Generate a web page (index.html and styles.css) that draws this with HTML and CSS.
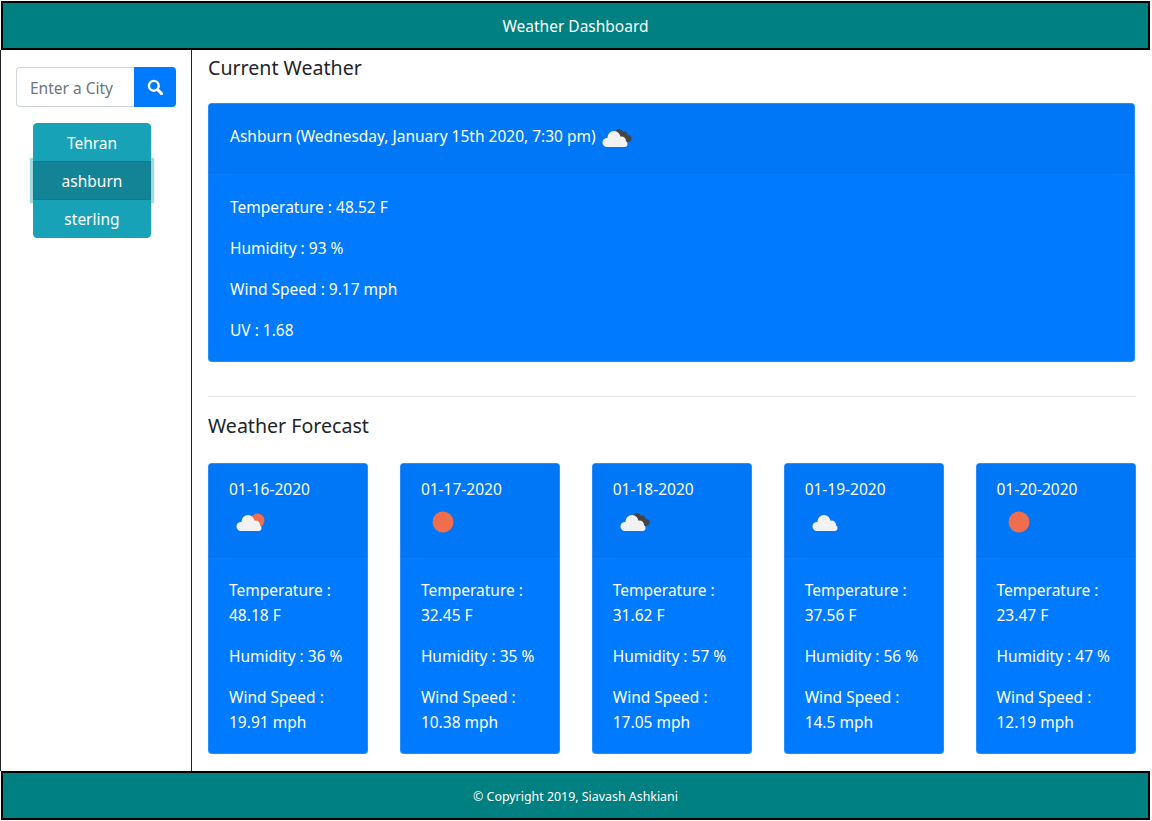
FILE: index.html
```html
<!DOCTYPE html>
<html lang="en">
<head>
    <meta charset="UTF-8">
    <title>Weather Dashboard</title>
    <link rel="stylesheet" href="styles.css">
</head>
<body>
    <svg class="icon-defs" aria-hidden="true">
        <symbol id="cloud-shape" viewBox="0 0 30 30">
            <g fill="#f2f2f2">
                <circle cx="5" cy="19.5" r="4.5"/>
                <circle cx="12" cy="14.5" r="6.5"/>
                <circle cx="19.5" cy="18" r="4.5"/>
                <circle cx="22.5" cy="21" r="3"/>
                <rect x="5" y="18" width="18" height="6"/>
            </g>
        </symbol>
        <symbol id="sun" viewBox="0 0 30 30">
            <circle cx="15" cy="15" r="10.5" fill="#ee6e4d"/>
        </symbol>
        <symbol id="cloud-sun" viewBox="0 0 30 30">
            <circle cx="21.5" cy="13.5" r="7" fill="#ee6e4d"/>
            <use href="#cloud-shape"/>
        </symbol>
        <symbol id="cloud-dark" viewBox="0 0 30 30">
            <g fill="#454545">
                <circle cx="17" cy="9.5" r="3.5"/>
                <circle cx="22" cy="12" r="3.5"/>
                <circle cx="26" cy="15.5" r="3.5"/>
                <rect x="16" y="10" width="8" height="8"/>
            </g>
            <use href="#cloud-shape"/>
        </symbol>
    </svg>

    <header class="bar top-bar">Weather Dashboard</header>

    <div class="layout">
        <aside class="sidebar">
            <form class="search">
                <input class="search-input" type="text" placeholder="Enter a City">
                <button class="search-btn" type="button" aria-label="Search">
                    <svg width="16" height="16" viewBox="0 0 16 16">
                        <circle cx="6.8" cy="6.8" r="4.9" fill="none" stroke="#fff" stroke-width="2.4"/>
                        <path d="M10.5 10.5L14.6 14.6" stroke="#fff" stroke-width="3" stroke-linecap="round"/>
                    </svg>
                </button>
            </form>
            <div class="city-list">
                <button class="city" type="button">Tehran</button>
                <button class="city active" type="button">ashburn</button>
                <button class="city" type="button">sterling</button>
            </div>
        </aside>

        <main class="content">
            <h2 class="section-title">Current Weather</h2>
            <section class="card current">
                <div class="card-header current-header">
                    <span class="current-title">Ashburn (Wednesday, January 15th 2020, 7:30 pm)</span>
                    <svg class="icon"><use href="#cloud-dark"/></svg>
                </div>
                <div class="card-body current-body">
                    <p>Temperature : 48.52 F</p>
                    <p>Humidity : 93 %</p>
                    <p>Wind Speed : 9.17 mph</p>
                    <p>UV : 1.68</p>
                </div>
            </section>

            <hr class="divider">

            <h2 class="section-title">Weather Forecast</h2>
            <div class="forecast">
                <section class="card">
                    <div class="card-header">
                        <div class="date">01-16-2020</div>
                        <svg class="icon"><use href="#cloud-sun"/></svg>
                    </div>
                    <div class="card-body">
                        <p>Temperature : 48.18 F</p>
                        <p>Humidity : 36 %</p>
                        <p>Wind Speed : 19.91 mph</p>
                    </div>
                </section>
                <section class="card">
                    <div class="card-header">
                        <div class="date">01-17-2020</div>
                        <svg class="icon"><use href="#sun"/></svg>
                    </div>
                    <div class="card-body">
                        <p>Temperature : 32.45 F</p>
                        <p>Humidity : 35 %</p>
                        <p>Wind Speed : 10.38 mph</p>
                    </div>
                </section>
                <section class="card">
                    <div class="card-header">
                        <div class="date">01-18-2020</div>
                        <svg class="icon"><use href="#cloud-dark"/></svg>
                    </div>
                    <div class="card-body">
                        <p>Temperature : 31.62 F</p>
                        <p>Humidity : 57 %</p>
                        <p>Wind Speed : 17.05 mph</p>
                    </div>
                </section>
                <section class="card">
                    <div class="card-header">
                        <div class="date">01-19-2020</div>
                        <svg class="icon"><use href="#cloud-shape"/></svg>
                    </div>
                    <div class="card-body">
                        <p>Temperature : 37.56 F</p>
                        <p>Humidity : 56 %</p>
                        <p>Wind Speed : 14.5 mph</p>
                    </div>
                </section>
                <section class="card">
                    <div class="card-header">
                        <div class="date">01-20-2020</div>
                        <svg class="icon"><use href="#sun"/></svg>
                    </div>
                    <div class="card-body">
                        <p>Temperature : 23.47 F</p>
                        <p>Humidity : 47 %</p>
                        <p>Wind Speed : 12.19 mph</p>
                    </div>
                </section>
            </div>
        </main>
    </div>

    <footer class="bar bottom-bar">© Copyright 2019, Siavash Ashkiani</footer>
</body>
</html>
```

FILE: styles.css
```css
/* Basic reset */
* {
    margin: 0;
    padding: 0;
    box-sizing: border-box;
}

body {
    font-family: "Noto Sans", Arial, sans-serif;
    font-size: 15.5px;
    line-height: 25px;
    background-color: #fff;
    color: #212529;
    height: 821px;
    overflow: hidden;
}

.icon-defs {
    display: none;
}

/* Header and footer */
.bar {
    display: flex;
    align-items: center;
    justify-content: center;
    margin: 0 2px 0 1px;
    background-color: #008080;
    border: 2px solid #000;
    color: #fff;
}

.top-bar {
    height: 49px;
    margin-top: 1px;
    padding-top: 2px;
}

.bottom-bar {
    height: 49px;
    font-size: 12.4px;
    padding-top: 2px;
}

.layout {
    display: flex;
    height: 721px;
}

/* Sidebar */
.sidebar {
    width: 192px;
    flex-shrink: 0;
    padding: 17px 15px 0 15px;
    border-left: 1px solid #212529;
    border-right: 1px solid #212529;
}

.search {
    display: flex;
    height: 40px;
}

.search-input {
    width: 118px;
    padding: 2px 13px 0;
    font: inherit;
    color: #495057;
    border: 1px solid #ced4da;
    border-right: none;
    border-radius: 4px 0 0 4px;
}

.search-input::placeholder {
    color: #6c757d;
}

.search-btn {
    width: 42px;
    display: flex;
    align-items: center;
    justify-content: center;
    background-color: #007bff;
    border: none;
    border-radius: 0 4px 4px 0;
}

.city-list {
    display: flex;
    flex-direction: column;
    width: 118px;
    margin: 16px 0 0 17px;
}

.city {
    height: 38px;
    padding-top: 1px;
    font: inherit;
    color: #fff;
    background-color: #17a2b8;
    border: 1px solid #17a2b8;
    position: relative;
    z-index: 1;
}

.city:first-child {
    padding-top: 3px;
    border-radius: 4px 4px 0 0;
}

.city:last-child {
    border-radius: 0 0 4px 4px;
}

.city.active {
    height: 39px;
    z-index: 0;
    background-color: #138496;
    border-color: #117a8b;
    box-shadow: 0 0 0 3.2px rgba(23, 162, 184, 0.4);
}

/* Main column */
.content {
    flex: 1;
    padding: 5px 16px 0 16px;
}

.section-title {
    font-size: 19.6px;
    font-weight: 400;
    line-height: 26px;
}

.card {
    background-color: #007bff;
    color: #fff;
    border-radius: 4px;
    border: 1px solid rgba(255, 255, 255, 0.15);
}

.card-header {
    background-color: rgba(0, 0, 0, 0.03);
    border-bottom: 1px solid rgba(0, 0, 0, 0.07);
}

.card-body p {
    margin-bottom: 16px;
}

.card-body p:last-child {
    margin-bottom: 0;
}

.icon {
    display: block;
    width: 30px;
    height: 30px;
}

/* Current weather */
.current {
    margin: 22px 1px 0 0;
    height: 259px;
}

.current-header {
    display: flex;
    align-items: center;
    gap: 6px;
    height: 69px;
    padding: 0 21px;
}

.current-title {
    margin-bottom: 4px;
}

.current-body {
    padding: 22px 21px;
}

.divider {
    margin: 34px 0 16px;
    border: none;
    border-top: 1px solid #e5e7ea;
}

/* Forecast */
.forecast {
    display: grid;
    grid-template-columns: repeat(5, 1fr);
    gap: 31.4px;
    margin-top: 24px;
}

.forecast .card {
    height: 291px;
}

.forecast .card-header {
    height: 93px;
    padding: 14px 20px 0;
}

.forecast .card-body {
    padding: 21px 20px 0;
}

.date {
    line-height: 22px;
}

.date + .icon {
    margin: 7px 0 0 7px;
}
```
